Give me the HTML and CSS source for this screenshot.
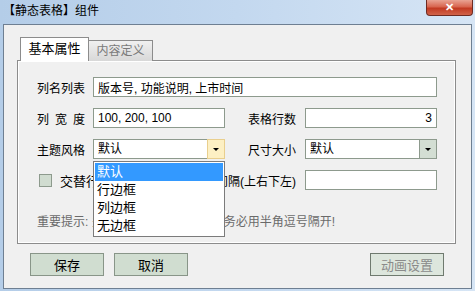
FILE: index.html
```html
<!DOCTYPE html>
<html lang="zh-CN">
<head>
    <meta charset="UTF-8">
    <title>【静态表格】组件</title>
    <link rel="stylesheet" href="styles.css">
</head>
<body>
    <div class="titlebar">
        <span class="title">【静态表格】组件</span>
        <span class="close">&#x2715;</span>
    </div>
    <div class="client">
        <div class="tabs">
            <div class="tab active">基本属性</div>
            <div class="tab">内容定义</div>
        </div>
        <div class="panel">
            <div class="row">
                <label class="lbl">列名列表</label>
                <input class="field wide" type="text" value="版本号, 功能说明, 上市时间">
            </div>
            <div class="row">
                <label class="lbl"><span class="spread">列 宽 度</span></label>
                <input class="field" type="text" value="100, 200, 100">
                <label class="lbl-right">表格行数</label>
                <input class="field num" type="text" value="3">
            </div>
            <div class="row">
                <label class="lbl">主题风格</label>
                <div class="combo">
                    <span class="combo-text">默认</span>
                    <span class="combo-btn hot"><i class="arrow"></i></span>
                    <ul class="droplist">
                        <li class="sel">默认</li>
                        <li>行边框</li>
                        <li>列边框</li>
                        <li>无边框</li>
                    </ul>
                </div>
                <label class="lbl-right">尺寸大小</label>
                <div class="combo">
                    <span class="combo-text">默认</span>
                    <span class="combo-btn"><i class="arrow"></i></span>
                </div>
            </div>
            <div class="row">
                <span class="check"></span>
                <span class="check-text">交替行背景色</span>
                <label class="lbl-right grow">单元格间隔(上右下左)</label>
                <input class="field" type="text" value="">
            </div>
            <div class="tip">重要提示: 多个列名与列宽度之间请务必用半角逗号隔开!</div>
        </div>
        <div class="buttons">
            <button class="btn">保存</button>
            <button class="btn">取消</button>
            <span class="spacer"></span>
            <button class="btn disabled">动画设置</button>
        </div>
    </div>
</body>
</html>
```

FILE: styles.css
```css
* {
    box-sizing: border-box;
}
body {
    margin: 0;
    width: 475px;
    height: 291px;
    overflow: hidden;
    font-family: "Liberation Sans", "Noto Sans CJK SC", sans-serif;
    font-size: 12px;
    color: #000;
    background: linear-gradient(90deg, #b4cde8 0%, #c3d8ef 50%, #d6e5f5 100%);
}
.titlebar {
    height: 24px;
    display: flex;
    justify-content: space-between;
    align-items: flex-start;
    padding-left: 3px;
    padding-right: 2px;
}
.title {
    margin-top: 4px;
    font-size: 12px;
    line-height: 15px;
}
.close {
    width: 47px;
    height: 16px;
    border: 1px solid #6e2b22;
    border-top: none;
    border-radius: 0 0 4px 4px;
    background: linear-gradient(#e9a393 0%, #d8654f 45%, #c23a22 55%, #d0634a 100%);
    color: #fff;
    font-size: 11px;
    font-weight: bold;
    line-height: 15px;
    text-align: center;
}
.client {
    margin: 0 3px 0 3px;
    height: 265px;
    border: 1px solid #6e7f92;
    background: #f0f0f0;
    padding: 12px 0 0 0;
}
.tabs {
    display: flex;
    align-items: flex-end;
    margin-left: 16px;
    height: 24px;
    position: relative;
    z-index: 1;
}
.tab {
    height: 21px;
    width: 64px;
    border: 1px solid #8c8c8c;
    border-bottom: none;
    border-left: none;
    background: linear-gradient(#f0f0f0, #d8d8d8);
    color: #7a7a7a;
    text-align: center;
    font-size: 12px;
    line-height: 20px;
}
.tab.active {
    height: 24px;
    width: 69px;
    border-left: 1px solid #8c8c8c;
    background: #fff;
    color: #000;
    line-height: 22px;
    font-size: 13px;
}
.panel {
    margin-left: 13px;
    margin-top: -1px;
    width: 439px;
    height: 184px;
    border: 1px solid #8c8c8c;
    box-shadow: inset 1px 1px 0 #fff, inset -1px -1px 0 #fff;
    padding: 16px 0 0 19px;
}
.row {
    display: flex;
    align-items: center;
    height: 20px;
    margin-bottom: 11px;
    width: 400px;
}
.lbl {
    width: 56px;
    font-size: 12px;
}
.spread {
    display: inline-block;
    width: 48px;
    text-align: justify;
    text-align-last: justify;
}
.lbl-right {
    width: 80px;
    text-align: right;
    padding-right: 9px;
    white-space: nowrap;
}
.lbl-right.grow {
    flex: 1;
    width: auto;
}
.field {
    width: 132px;
    height: 20px;
    border: 1px solid #8d9a8d;
    background: #fff;
    font-family: inherit;
    font-size: 12px;
    padding: 0 4px;
    outline: none;
}
.field.wide {
    width: 344px;
}
.field.num {
    text-align: right;
}
.combo {
    position: relative;
    width: 132px;
    height: 20px;
    border: 1px solid #8d9a8d;
    background: #fff;
    display: flex;
}
.combo-text {
    flex: 1;
    padding-left: 4px;
    line-height: 18px;
}
.combo-btn {
    width: 18px;
    height: 20px;
    margin-top: -1px;
    margin-right: -1px;
    border: 1px solid #8d9a8d;
    background: #d3ded3;
    display: flex;
    align-items: center;
    justify-content: center;
}
.combo-btn.hot {
    background: #fdf0c4;
    border-color: #e9cf8e;
}
.arrow {
    width: 0;
    height: 0;
    border-left: 3px solid transparent;
    border-right: 3px solid transparent;
    border-top: 3px solid #000;
}
.droplist {
    position: absolute;
    left: -1px;
    top: 21px;
    width: 132px;
    margin: 0;
    padding: 1px;
    list-style: none;
    border: 1px solid #7b7b7b;
    background: #fff;
    z-index: 5;
}
.droplist li {
    height: 18px;
    line-height: 18px;
    padding-left: 2px;
    font-size: 13px;
}
.droplist li.sel {
    background: #3399ff;
    color: #fff;
}
.check {
    width: 13px;
    height: 13px;
    margin-left: 2px;
    border: 1px solid #8d9a8d;
    background: #d0dcd0;
}
.check-text {
    margin-left: 8px;
    font-size: 13px;
}
.tip {
    margin-top: 22px;
    color: #6a6a6a;
    font-size: 12px;
}
.buttons {
    display: flex;
    margin: 9px 27px 0 26px;
    gap: 10px;
}
.spacer {
    flex: 1;
}
.btn {
    width: 74px;
    height: 23px;
    border: 1px solid #889588;
    background: #d0ddd0;
    font-family: inherit;
    font-size: 13px;
    color: #000;
    padding: 0;
}
.btn.disabled {
    background: #dde6dd;
    border-color: #6f7a6f;
    color: #8a8a8a;
}
```
